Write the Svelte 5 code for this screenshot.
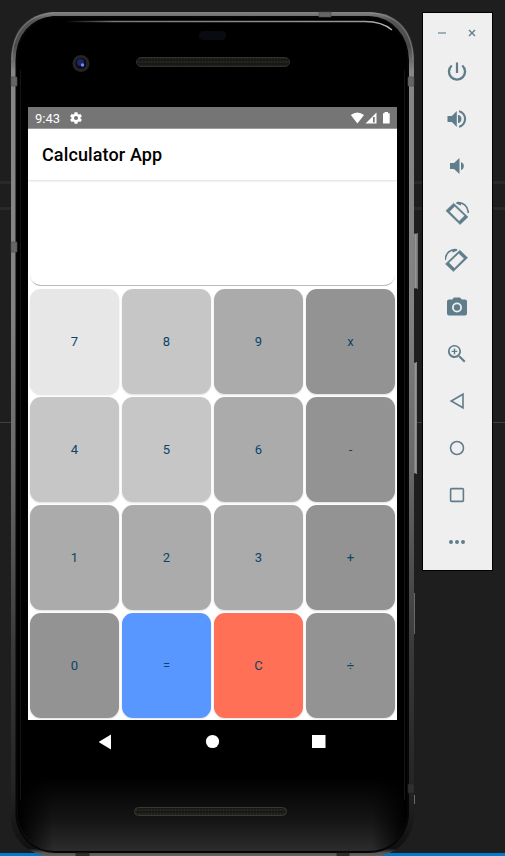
<script>
  const keys = [
    ['7', '#e7e7e7'], ['8', '#c6c6c6'], ['9', '#ababab'], ['x', '#939393'],
    ['4', '#c6c6c6'], ['5', '#c6c6c6'], ['6', '#ababab'], ['-', '#939393'],
    ['1', '#ababab'], ['2', '#ababab'], ['3', '#ababab'], ['+', '#939393'],
    ['0', '#939393'], ['=', '#5897ff'], ['C', '#ff7056'], ['÷', '#939393']
  ];
  const tools = [
    { name: 'Power', d: 'M13.1 2.500h-2.200v10.500h2.200zm4.900 2.200-1.500 1.600A6.900 6.900 0 1 1 7.500 6.300L6 4.700a9.200 9.200 0 1 0 12 0z' },
    { name: 'Volume up', d: 'M2.500 9v6h4.300l5 5V4l-5 5zm14 3c0-1.800-1-3.300-2.500-4h-1v8h1c1.500-.7 2.500-2.200 2.500-4zM14 3.200v2.100a7 7 0 0 1 0 13.400v2.100a9 9 0 0 0 0-17.600z' },
    { name: 'Volume down', d: 'M19 12A4.500 4.500 0 0 0 16 8v8a4.500 4.500 0 0 0 3-4zM5 9v6h4l5.500 5V4L9 9z' },
    { name: 'Rotate left', flip: false },
    { name: 'Rotate right', flip: true },
    { name: 'Screenshot', d: 'M9 2.500 7.200 4.500H4a2 2 0 0 0-2 2v12a2 2 0 0 0 2 2h16a2 2 0 0 0 2-2v-12a2 2 0 0 0-2-2h-3.200L15 2.500zm3 15a5 5 0 1 1 0-10 5 5 0 0 1 0 10zm0-1.800a3.200 3.200 0 1 0 0-6.400 3.200 3.200 0 0 0 0 6.400z' },
    { name: 'Zoom', d: 'M15.500 14h-.8l-.3-.3a6.500 6.500 0 1 0-.7.7l.3.3v.8l5 5 1.500-1.500zm-6 0a4.800 4.800 0 1 1 0-9.600 4.800 4.800 0 0 1 0 9.600zM12.300 8.700h-2.100V6.600H8.800v2.100H6.700v1.400h2.100v2.100h1.400v-2.100h2.100z' },
    { name: 'Back', line: 'M18 5.200v13.600L6.200 12z' },
    { name: 'Home', line: 'M18.500 12a6.500 6.500 0 1 1-13 0 6.500 6.500 0 0 1 13 0z' },
    { name: 'Overview', line: 'M6.600 5.600h10.800q1 0 1 1v10.800q0 1-1 1H6.600q-1 0-1-1V6.600q0-1 1-1z' },
    { name: 'More', d: 'M6 10a2 2 0 1 0 0 4 2 2 0 0 0 0-4zm6 0a2 2 0 1 0 0 4 2 2 0 0 0 0-4zm6 0a2 2 0 1 0 0 4 2 2 0 0 0 0-4z' }
  ];
</script>

<main class="desktop">
  <svg class="shell" width="505" height="856" viewBox="0 0 505 856" aria-hidden="true">
    <defs>
      <linearGradient id="metal" x1="0" y1="0" x2="0" y2="1">
        <stop offset="0" stop-color="#858585" /><stop offset=".01" stop-color="#555" />
        <stop offset=".04" stop-color="#4a4a4a" /><stop offset=".07" stop-color="#868686" />
        <stop offset=".35" stop-color="#828282" /><stop offset=".55" stop-color="#666" />
        <stop offset=".75" stop-color="#3a3a3a" /><stop offset=".92" stop-color="#242424" />
        <stop offset=".99" stop-color="#101010" /><stop offset=".995" stop-color="#555" />
        <stop offset="1" stop-color="#686868" />
      </linearGradient>
      <linearGradient id="glass" x1="0" y1="0" x2="0" y2="1">
        <stop offset="0" stop-color="#000" /><stop offset=".91" stop-color="#000" />
        <stop offset=".96" stop-color="#141414" /><stop offset="1" stop-color="#2d2d2d" />
      </linearGradient>
      <linearGradient id="edge">
        <stop offset="0" stop-color="#000" /><stop offset=".09" stop-color="#000" stop-opacity="0" />
        <stop offset=".91" stop-color="#000" stop-opacity="0" /><stop offset="1" stop-color="#000" />
      </linearGradient>
      <linearGradient id="shine">
        <stop offset="0" stop-color="#777" stop-opacity="0" /><stop offset=".15" stop-color="#777" />
        <stop offset=".9" stop-color="#999" /><stop offset="1" stop-color="#bbb" />
      </linearGradient>
      <linearGradient id="side"><stop offset="0" stop-color="#444" /><stop offset=".6" stop-color="#999" /><stop offset="1" stop-color="#666" /></linearGradient>
      <pattern id="mesh" width="3" height="4" patternUnits="userSpaceOnUse">
        <rect width="3" height="4" fill="#181815" /><circle cx="1.500" cy="2" r="1" fill="#2b2925" />
      </pattern>
    </defs>
    <path d="M0 182.500H505M0 208.500H505" stroke="#292929" stroke-width="3" />
    <path d="M0 422.500H505" stroke="#404040" />
    <path d="M0 853h505v3H0z" fill="#007acc" />
    <path d="M413 233h5v56h-5zM412 362h5v112h-5z" fill="url(#side)" />
    <path d="M413 233.500h4M413 288.500h4M412 362.500h4M412 473.500h4" stroke="#444" />
    <path d="M414.500 593v41M414.500 795v9" stroke="#686868" />
    <path d="M53 12H370C398 13 414 31 414 60V818C412 842 393 857 370 857H52C29 855 12 841 11 818V60C11 31 27 14 53 12z" fill="url(#metal)" />
    <path d="M12 60C12 32 28 15 53 13M370 13C397 14 413 32 413 60" fill="none" stroke="#8a8a8a" stroke-opacity=".7" />
    <path d="M53 17H369C392 18 407.500 36 408 60V816C406 838 389 852 368 852H55C35 852 18 837 16.500 816V60C17 36 31 19 53 17z" fill="url(#glass)" stroke="#050505" stroke-width="2" />
    <path d="M53 18H369C391 19 407 37 407 60V816C405 837 388 851 368 851H55C36 851 19 836 18 816V60C18 37 32 20 53 18z" fill="url(#edge)" />
    <path d="M20.500 70V800M404.500 70V800" stroke="#151515" stroke-width="1" />
    <path d="M65 21.500H365Q382 21.500 392 30" fill="none" stroke="url(#shine)" stroke-width="1.300" />
    <path d="M11 77h6v9h-6zM408 77h6v9h-6zM11 242h6v10h-6zM319 12h12v5h-12z" fill="#666" stroke="#4a4a4a" stroke-width=".6" />
    <path d="M408 784h6v9h-6zM76 853h13v3H76zM337 853h12v3h-12z" fill="#303030" stroke="#222" stroke-width=".7" />
    <rect x="199" y="31" width="27" height="9" rx="4.500" fill="#0a0b10" />
    <rect x="136.500" y="57.500" width="153" height="9" rx="4.500" fill="url(#mesh)" stroke="#302f2b" />
    <rect x="134.500" y="807.500" width="152" height="8" rx="4" fill="url(#mesh)" stroke="#3a3834" />
    <circle cx="81" cy="63.500" r="8.500" fill="#242427" /><circle cx="81" cy="63.500" r="5.500" fill="#0b0c18" />
    <circle cx="80.500" cy="62.500" r="3.500" fill="#1c2768" /><circle cx="82.500" cy="65" r="1.700" fill="#7088f0" />
  </svg>

  <section class="screen">
    <header class="status">
      <span>9:43</span>
      <svg width="14" height="14" viewBox="0 0 24 24"><path fill="#fff" fill-rule="evenodd" d="m9.500 2-.5 3-2 1-2.700-1L2 9l2.200 2v2L2 15l2.300 4L7 18l2 1 .5 3h5l.5-3 2-1 2.700 1 2.300-4-2.200-2v-2L22 9l-2.300-4L17 6l-2-1-.5-3zM12 8.500a3.500 3.500 0 1 1 0 7 3.500 3.500 0 0 1 0-7z" /></svg>
      <svg class="signals" width="40" height="12" viewBox="0 0 40 12"><path fill="#fff" d="M.8 3Q7.300 -2 14 3L7.400 11.500zM33 1.300H34.500V0h3.500v1.300h1.700v10.200H33zM15.500 11.500 26.500.5v11z" /><path fill="#757575" d="M23 5h1.700v5.500H23z" /></svg>
    </header>
    <h1>Calculator App</h1>
    <div class="display"><output></output></div>
    <div class="keypad">
      {#each keys as [label, color]}
        <button style:background-color={color}>{label}</button>
      {/each}
    </div>
  </section>

  <nav class="navigation">
    <svg width="228" height="16" viewBox="0 0 228 16" fill="#fff"><path d="M-.3 8 12 .5v15zM213 1h13.500v13H213z" /><circle cx="113.500" cy="7.500" r="6.600" /></svg>
  </nav>

  <aside class="toolbar">
    <div class="window-actions">
      <svg width="38" height="10" viewBox="0 0 38 10" fill="none" stroke="#607d8b"><path d="M0 5h8" stroke="#9eb0b8" stroke-width="2" /><path d="m31 2 6 6m0-6-6 6" stroke-width="1.400" /></svg>
    </div>
    {#each tools as tool}
      <button aria-label={tool.name}>
        <svg width="24" height="24" viewBox="0 0 24 24">
          {#if tool.d}
            <path d={tool.d} fill="#607d8b" fill-rule="evenodd" />
          {:else if tool.line}
            <path d={tool.line} fill="none" stroke="#607d8b" stroke-width="1.600" />
          {:else}
            <g transform={tool.flip ? 'matrix(-1 0 0 1 23.5 0)' : null}>
              <path d="M.9 9.700 8.700 2.200 23 15.900l-7.900 7.700zM4.400 10.600l9.700 9.700 5.600-5.500L9.700 5.300z" fill="#607d8b" stroke="#607d8b" stroke-width=".5" stroke-linejoin="round" fill-rule="evenodd" />
              <path d="M11.500 1.800C18 .5 23 5.200 23.300 12M11.500 1.800 16 3.800" fill="none" stroke="#607d8b" stroke-width="1.700" />
            </g>
          {/if}
        </svg>
      </button>
    {/each}
  </aside>
</main>

<style>
  :global(body) { margin: 0; background: #1e1e1e; }
  .desktop { position: relative; width: 505px; height: 856px; overflow: hidden; background: #1e1e1e; font-family: Roboto, sans-serif; }
  .shell { display: block; }
  .screen { position: absolute; left: 28px; top: 107px; width: 369px; height: 613px; display: flex; flex-direction: column; overflow: hidden; background: #fff; }
  .status { height: 22px; box-sizing: border-box; padding: 0 7px; display: flex; align-items: center; background: #757575; border-bottom: 1px solid #999; color: #fff; font-size: 13px; }
  .status span { width: 34px; padding-top: 1px; }
  .signals { margin-left: auto; }
  h1 { box-sizing: border-box; height: 51px; margin: 0; padding: 1px 0 0 14px; display: flex; align-items: center; font-size: 18px; line-height: 20px; letter-spacing: .12px; font-weight: 500; color: #000; box-shadow: 0 1px 2px #ddd; }
  .display { height: 106px; padding: 0 2px; }
  output { display: block; box-sizing: border-box; height: 106px; border-bottom: 1px solid #bbb; border-radius: 0 0 11px 11px; }
  .keypad { padding: 3px 2px 2px; display: grid; grid-template-columns: repeat(4, 89px); grid-auto-rows: 105px; gap: 3px; }
  .keypad button { border: 0; padding: 0 0 1px; border-radius: 11px; color: #0b4566; font: 13px Roboto, sans-serif; box-shadow: 0 1px 2px #0002; }
  .navigation { position: absolute; left: 28px; top: 720px; width: 369px; height: 43px; display: flex; align-items: center; padding-left: 71px; box-sizing: border-box; }
  .toolbar { position: absolute; left: 422px; top: 12px; width: 71px; height: 559px; box-sizing: border-box; border: 1px solid #000; background: #efefef; display: flex; flex-direction: column; align-items: flex-start; padding-left: 10px; }
  .window-actions { width: 47px; height: 35.500px; flex: none; display: flex; align-items: center; justify-content: center; padding-top: 4px; box-sizing: border-box; }
  .toolbar button { width: 47px; height: 47px; flex: none; padding: 0 0 0 12px; border: 0; background: none; display: grid; place-items: center start; }
</style>
